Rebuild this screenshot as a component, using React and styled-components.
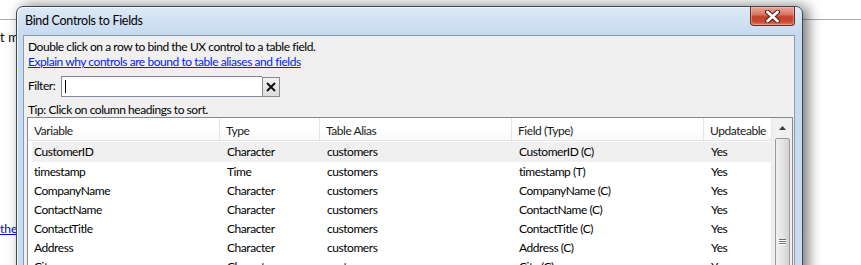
import React from "react";
import styled, { createGlobalStyle } from "styled-components";

const GlobalStyle = createGlobalStyle`
  *, *::before, *::after {
    box-sizing: border-box;
  }
  html, body {
    margin: 0;
    padding: 0;
    height: 265px;
    overflow: hidden;
    background: #ffffff;
  }
  body {
    font-family: Lato, "Noto Sans", sans-serif;
    font-size: 12px;
    letter-spacing: -0.45px;
    color: #000;
  }
`;

const Page = styled.div`
  position: relative;
  width: 861px;
  height: 265px;
  overflow: hidden;
`;

const PageTopBar = styled.div`
  height: 20px;
  border-bottom: 1px solid #a9a9a9;
`;

const PageText = styled.div`
  padding: 10px 0 0 0;
  line-height: 15px;
  letter-spacing: 0.3px;
  font-size: 12.5px;
  white-space: nowrap;
`;

const PageLink = styled.a`
  display: block;
  margin-top: 176px;
  line-height: 15px;
  letter-spacing: 0;
  color: #0000ee;
  text-decoration: underline;
  white-space: nowrap;
`;

const Window = styled.div`
  position: absolute;
  left: 16px;
  top: 6px;
  width: 787px;
  height: 300px;
  border: 1px solid #3e4652;
  border-radius: 7px 7px 0 0;
  background: linear-gradient(180deg, #dde9f6 0px, #c6daf0 28px, #c9dcf0 100%);
  box-shadow: 5px 0 14px rgba(0, 0, 0, 0.55), inset 1px 1px 0 rgba(255, 255, 255, 0.7);
  display: flex;
  flex-direction: column;
  padding: 0 7px 0 6px;
`;

const TitleBar = styled.div`
  height: 28px;
  display: flex;
  align-items: flex-start;
  justify-content: space-between;
`;

const Title = styled.div`
  padding: 6px 0 0 2px;
  line-height: 15px;
  font-size: 12.5px;
  letter-spacing: -0.3px;
  color: #000;
`;

const CloseButton = styled.div`
  width: 45px;
  height: 19px;
  border: 1px solid #6b2a22;
  border-top: none;
  border-radius: 0 0 4px 4px;
  background: linear-gradient(180deg, #e8a898 0%, #d97a66 40%, #c5402b 55%, #c94a34 80%, #dd7a5e 100%);
  box-shadow: inset 0 0 0 1px rgba(255, 200, 190, 0.45);
  display: flex;
  align-items: center;
  justify-content: center;
`;

const Client = styled.div`
  flex: 1;
  background: #f0f0f0;
  border: 1px solid #8d9aad;
  padding: 3px 2px 0 3px;
  display: flex;
  flex-direction: column;
`;

const Line = styled.div`
  line-height: 15px;
  padding-left: 1px;
  white-space: nowrap;
`;

const HelpLink = styled.a`
  display: block;
  line-height: 16px;
  padding-left: 1px;
  color: #0026e6;
  text-decoration: underline;
  white-space: nowrap;
`;

const FilterRow = styled.div`
  display: flex;
  align-items: center;
  margin-top: 6px;
  height: 21px;
  padding-left: 1px;
`;

const FilterLabel = styled.span`
  width: 33px;
  margin-top: -2px;
`;

const FilterInput = styled.div`
  width: 201px;
  height: 21px;
  border: 1px solid #7f8a96;
  border-right: none;
  background: #fff;
  display: flex;
  align-items: center;
  padding-left: 3px;
`;

const Caret = styled.span`
  width: 1px;
  height: 13px;
  background: #000;
`;

const ClearButton = styled.div`
  width: 18px;
  height: 20px;
  border: 1px solid #8a8a8a;
  background: linear-gradient(180deg, #f4f4f4, #dcdcdc);
  display: flex;
  align-items: center;
  justify-content: center;
`;

const Tip = styled.div`
  line-height: 15px;
  margin-top: 5px;
  padding-left: 1px;
  white-space: nowrap;
`;

const Table = styled.div`
  width: 766px;
  flex: 1;
  border: 1px solid #828790;
  background: #fff;
  display: flex;
`;

const Grid = styled.div`
  flex: 1;
  display: flex;
  flex-direction: column;
`;

const HeaderRow = styled.div`
  display: grid;
  grid-template-columns: 192px 100px 192px 192px 1fr;
  height: 23px;
  border-bottom: 1px solid #e5e5e5;
  background: linear-gradient(180deg, #ffffff 0%, #ffffff 60%, #f6f7f9 100%);
`;

const HeaderCell = styled.div`
  padding-left: ${(p) => p.$pad}px;
  line-height: 25px;
  color: #1a1a1a;
  border-right: ${(p) => (p.$last ? "none" : "1px solid #e3e5e8")};
  white-space: nowrap;
`;

const Body = styled.div`
  padding: 1px 0 0 4px;
`;

const Row = styled.div`
  display: grid;
  grid-template-columns: 188px 100px 192px 192px 1fr;
  height: ${(p) => (p.$hot ? 20 : 19)}px;
  background: ${(p) => (p.$hot ? "#f0f0f0" : "transparent")};
`;

const Cell = styled.div`
  padding-left: ${(p) => p.$pad}px;
  line-height: 19px;
  white-space: nowrap;
`;

const ScrollBar = styled.div`
  width: 21px;
  background: #f0f0f0;
  border-left: 1px solid #e8e8e8;
  display: flex;
  flex-direction: column;
  align-items: center;
`;

const ArrowButton = styled.div`
  height: 19px;
  width: 100%;
  display: flex;
  align-items: center;
  justify-content: center;
`;

const Thumb = styled.div`
  width: 15px;
  flex: 1;
  margin-top: 1px;
  border: 1px solid #9a9a9a;
  border-radius: 2px;
  background: linear-gradient(90deg, #f0f0f0 0%, #e4e4e4 50%, #d2d2d2 100%);
  display: flex;
  flex-direction: column;
  align-items: center;
  padding-top: 100px;
`;

const Grip = styled.div`
  width: 7px;
  height: 1px;
  background: #6f6f6f;
  margin-bottom: 1px;
  box-shadow: 0 1px 0 #ffffff;
`;

const columns = [
  { key: "variable", title: "Variable" },
  { key: "type", title: "Type" },
  { key: "alias", title: "Table Alias" },
  { key: "field", title: "Field (Type)" },
  { key: "upd", title: "Updateable" },
];

const rows = [
  ["CustomerID", "Character", "customers", "CustomerID (C)", "Yes"],
  ["timestamp", "Time", "customers", "timestamp (T)", "Yes"],
  ["CompanyName", "Character", "customers", "CompanyName (C)", "Yes"],
  ["ContactName", "Character", "customers", "ContactName (C)", "Yes"],
  ["ContactTitle", "Character", "customers", "ContactTitle (C)", "Yes"],
  ["Address", "Character", "customers", "Address (C)", "Yes"],
  ["City", "Character", "customers", "City (C)", "Yes"],
];

const CloseIcon = () => (
  <svg width="17" height="13" viewBox="0 0 17 13">
    <path d="M3.5 2 L13.5 11 M13.5 2 L3.5 11" stroke="#4a2620" strokeWidth="5" strokeLinecap="round" />
    <path d="M3.5 2 L13.5 11 M13.5 2 L3.5 11" stroke="#ffffff" strokeWidth="2.8" strokeLinecap="round" />
  </svg>
);

const ClearIcon = () => (
  <svg width="10" height="10" viewBox="0 0 10 10">
    <path d="M1 1 L9 9 M9 1 L1 9" stroke="#111" strokeWidth="2" />
  </svg>
);

const UpArrow = () => (
  <svg width="7" height="4" viewBox="0 0 7 4">
    <path d="M0 4 L3.5 0 L7 4 Z" fill="#3b3b3b" />
  </svg>
);

const App = () => {
  return (
    <>
      <GlobalStyle />
      <Page>
        <PageTopBar />
        <PageText>t make</PageText>
        <PageLink href="#">the</PageLink>

        <Window>
          <TitleBar>
            <Title>Bind Controls to Fields</Title>
            <CloseButton>
              <CloseIcon />
            </CloseButton>
          </TitleBar>
          <Client>
            <Line>Double click on a row to bind the UX control to a table field.</Line>
            <HelpLink href="#">Explain why controls are bound to table aliases and fields</HelpLink>
            <FilterRow>
              <FilterLabel>Filter:</FilterLabel>
              <FilterInput>
                <Caret />
              </FilterInput>
              <ClearButton>
                <ClearIcon />
              </ClearButton>
            </FilterRow>
            <Tip>Tip: Click on column headings to sort.</Tip>
            <Table>
              <Grid>
                <HeaderRow>
                  {columns.map((c, i) => (
                    <HeaderCell key={c.key} $pad={6} $last={i === columns.length - 1}>
                      {c.title}
                    </HeaderCell>
                  ))}
                </HeaderRow>
                <Body>
                  {rows.map((r, ri) => (
                    <Row key={r[0]} $hot={ri === 0}>
                      {r.map((v, ci) => (
                        <Cell key={ci} $pad={ci === 0 ? 2 : 7}>
                          {v}
                        </Cell>
                      ))}
                    </Row>
                  ))}
                </Body>
              </Grid>
              <ScrollBar>
                <ArrowButton>
                  <UpArrow />
                </ArrowButton>
                <Thumb>
                  <Grip />
                  <Grip />
                  <Grip />
                </Thumb>
              </ScrollBar>
            </Table>
          </Client>
        </Window>
      </Page>
    </>
  );
};

export default App;
